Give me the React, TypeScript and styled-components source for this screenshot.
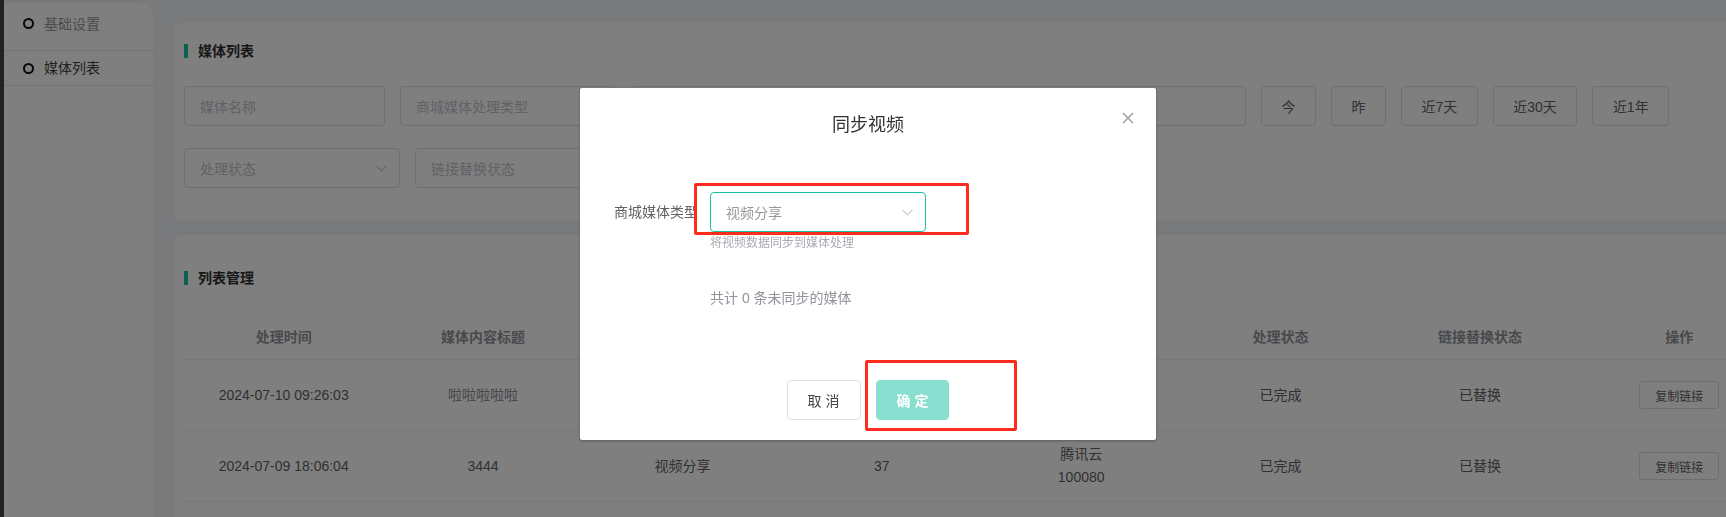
import React from "react";
import styled, { createGlobalStyle } from "styled-components";

const FONT = `"Liberation Sans", "Noto Sans CJK SC", sans-serif`;
const PRIMARY = "#13c2a2";

const GlobalStyle = createGlobalStyle`
  html, body { margin: 0; padding: 0; overflow: hidden; }
  body { font-family: ${FONT}; background: #f2f4f7; }
  * { box-sizing: border-box; }
  input { font-family: ${FONT}; }
`;

const Page = styled.div`
  display: flex;
  width: 1726px;
  height: 517px;
  overflow: hidden;
  background: #f2f4f7;
`;

const EdgeStrip = styled.div`
  flex: none;
  width: 4px;
  background: #444;
`;

const Sidebar = styled.nav`
  flex: none;
  width: 149px;
  margin-top: 3px;
  background: #fff;
  border-top-right-radius: 12px;
  display: flex;
  flex-direction: column;
`;

const NavItem = styled.div<{ $active?: boolean; $first?: boolean }>`
  display: flex;
  align-items: center;
  gap: 10px;
  padding-left: 19px;
  height: ${(p) => (p.$first ? 48 : 35)}px;
  padding-bottom: ${(p) => (p.$first ? 6 : 0)}px;
  border-bottom: 1px solid #e6e6e6;
  font-size: 14px;
  line-height: 20px;
  color: ${(p) => (p.$active ? "#444" : "#999")};
`;

const NavDot = styled.span`
  width: 11px;
  height: 11px;
  border: 2px solid #111;
  border-radius: 50%;
  flex: none;
`;

const Main = styled.main`
  flex: none;
  display: flex;
  flex-direction: column;
  gap: 15px;
  padding: 23px 0 0 21px;
`;

const Card = styled.section<{ $pt: number; $pb: number }>`
  width: 1640px;
  background: #fff;
  border-radius: 8px;
  padding: ${(p) => p.$pt}px 10px ${(p) => p.$pb}px;
`;

const SectionTitle = styled.h2`
  margin: 0;
  display: flex;
  align-items: center;
  gap: 10px;
  height: 14px;
  font-size: 14px;
  line-height: 14px;
  font-weight: bold;
  color: #303133;
  &::before {
    content: "";
    width: 4px;
    height: 14px;
    background: ${PRIMARY};
  }
`;

const FilterRow = styled.div<{ $mt: number }>`
  display: flex;
  gap: 15px;
  margin-top: ${(p) => p.$mt}px;
`;

const Field = styled.div<{ $w: number }>`
  flex: none;
  width: ${(p) => p.$w}px;
  height: 40px;
  border: 1px solid #dcdfe6;
  border-radius: 4px;
  background: #fff;
  display: flex;
  align-items: center;
  justify-content: space-between;
  padding: 0 12px 0 15px;
  font-size: 14px;
  color: #c0c4cc;
`;

const RangeSep = styled.span`
  color: #606266;
  padding: 0 8px;
`;

const RangeHalf = styled.span`
  flex: 1;
  text-align: center;
`;

const QuickBtn = styled.button`
  flex: none;
  height: 40px;
  padding: 0 19.5px;
  border: 1px solid #dcdfe6;
  border-radius: 4px;
  background: #fff;
  font-family: ${FONT};
  font-size: 14px;
  color: #606266;
`;

const Grid = styled.div`
  margin-top: 27px;
  width: 1595px;
`;

const GridRow = styled.div<{ $h: number }>`
  display: grid;
  grid-template-columns: repeat(8, 199.375px);
  height: ${(p) => p.$h}px;
  border-bottom: 1px solid #ebeef5;
`;

const HeadCell = styled.div`
  display: flex;
  align-items: center;
  justify-content: center;
  font-size: 14px;
  font-weight: bold;
  color: #909399;
`;

const Cell = styled.div<{ $muted?: boolean }>`
  display: flex;
  flex-direction: column;
  align-items: center;
  justify-content: center;
  font-size: 14px;
  line-height: 23px;
  color: ${(p) => (p.$muted ? "#8d8f94" : "#606266")};
`;

const SmallBtn = styled.button`
  height: 28px;
  width: 80px;
  padding: 0;
  border: 1px solid #dcdfe6;
  border-radius: 3px;
  background: #fff;
  font-family: ${FONT};
  font-size: 12px;
  color: #606266;
`;

const Mask = styled.div`
  position: fixed;
  inset: 0;
  background: rgba(0, 0, 0, 0.5);
`;

const DialogLayer = styled.div`
  position: fixed;
  inset: 0;
  display: flex;
  justify-content: center;
  align-items: flex-start;
  padding: 88px 0 0 10px;
`;

const Dialog = styled.div`
  position: relative;
  width: 576px;
  height: 352px;
  background: #fff;
  border-radius: 2px;
  box-shadow: 0 1px 3px rgba(0, 0, 0, 0.3);
  display: flex;
  flex-direction: column;
`;

const DialogTitle = styled.div`
  padding: 25px 20px 0;
  text-align: center;
  font-size: 18px;
  line-height: 24px;
  color: #303133;
`;

const CloseBtn = styled.button`
  position: absolute;
  left: 542px;
  top: 24px;
  width: 12px;
  height: 12px;
  padding: 0;
  border: 0;
  background: none;
  display: flex;
`;

const DialogBody = styled.div`
  padding-top: 55px;
  display: flex;
  flex-direction: column;
`;

const FormRow = styled.div`
  display: flex;
  align-items: center;
`;

const FormLabel = styled.label`
  width: 130px;
  padding-right: 12px;
  text-align: right;
  font-size: 14px;
  line-height: 40px;
  color: #606266;
`;

const SelectBox = styled.div`
  width: 216px;
  height: 40px;
  border: 1px solid ${PRIMARY};
  border-radius: 4px;
  display: flex;
  align-items: center;
  justify-content: space-between;
  padding: 0 12px 0 15px;
  font-size: 14px;
  color: #999;
`;

const Indented = styled.div<{ $mt: number; $size: number; $color: string }>`
  margin: ${(p) => p.$mt}px 0 0 130px;
  font-size: ${(p) => p.$size}px;
  line-height: 20px;
  color: ${(p) => p.$color};
`;

const DialogFooter = styled.div`
  margin-top: auto;
  padding-bottom: 20px;
  display: flex;
  justify-content: center;
  gap: 15px;
`;

const FooterBtn = styled.button<{ $primary?: boolean }>`
  height: 40px;
  padding: 0 20px;
  border-radius: 4px;
  border: 1px solid ${(p) => (p.$primary ? "#88dfcf" : "#dcdfe6")};
  background: ${(p) => (p.$primary ? "#88dfcf" : "#fff")};
  color: ${(p) => (p.$primary ? "#fff" : "#444")};
  font-weight: ${(p) => (p.$primary ? "bold" : "normal")};
  font-family: ${FONT};
  font-size: 14px;
  white-space: pre;
`;

const Annotation = styled.div<{ $l: number; $t: number; $w: number; $h: number }>`
  position: absolute;
  left: ${(p) => p.$l}px;
  top: ${(p) => p.$t}px;
  width: ${(p) => p.$w}px;
  height: ${(p) => p.$h}px;
  border: 3px solid #ff2b1c;
  border-radius: 2px;
  pointer-events: none;
`;

const Chevron = ({ color = "#c0c4cc" }: { color?: string }) => (
  <svg width="11" height="7" viewBox="0 0 11 7" fill="none">
    <polyline points="0.5,0.8 5.5,5.8 10.5,0.8" stroke={color} strokeWidth="1.1" />
  </svg>
);

const headers = ["处理时间", "媒体内容标题", "媒体类型", "媒体ID", "存储位置", "处理状态", "链接替换状态", "操作"];

const rows = [
  { time: "2024-07-10 09:26:03", title: "啦啦啦啦啦", muted: true, type: "视频分享", id: "38" },
  { time: "2024-07-09 18:06:04", title: "3444", muted: false, type: "视频分享", id: "37" },
];

export default function App() {
  return (
    <>
      <GlobalStyle />
      <Page>
        <EdgeStrip />
        <Sidebar>
          <NavItem $first>
            <NavDot />
            基础设置
          </NavItem>
          <NavItem $active>
            <NavDot />
            媒体列表
          </NavItem>
        </Sidebar>
        <Main>
          <Card $pt={21} $pb={32}>
            <SectionTitle>媒体列表</SectionTitle>
            <FilterRow $mt={28}>
              <Field $w={201}>媒体名称</Field>
              <Field $w={216}>商城媒体处理类型</Field>
              <Field $w={615}>
                <RangeHalf>开始日期</RangeHalf>
                <RangeSep>至</RangeSep>
                <RangeHalf>结束日期</RangeHalf>
              </Field>
              <QuickBtn>今</QuickBtn>
              <QuickBtn>昨</QuickBtn>
              <QuickBtn>近7天</QuickBtn>
              <QuickBtn>近30天</QuickBtn>
              <QuickBtn>近1年</QuickBtn>
            </FilterRow>
            <FilterRow $mt={22}>
              <Field $w={216}>
                处理状态
                <Chevron />
              </Field>
              <Field $w={216}>
                链接替换状态
                <Chevron />
              </Field>
            </FilterRow>
          </Card>
          <Card $pt={36} $pb={40}>
            <SectionTitle>列表管理</SectionTitle>
            <Grid>
              <GridRow $h={48}>
                {headers.map((h) => (
                  <HeadCell key={h}>{h}</HeadCell>
                ))}
              </GridRow>
              {rows.map((r) => (
                <GridRow $h={71} key={r.time}>
                  <Cell>{r.time}</Cell>
                  <Cell $muted={r.muted}>{r.title}</Cell>
                  <Cell>{r.type}</Cell>
                  <Cell>{r.id}</Cell>
                  <Cell>
                    <span>腾讯云</span>
                    <span>100080</span>
                  </Cell>
                  <Cell>已完成</Cell>
                  <Cell>已替换</Cell>
                  <Cell>
                    <SmallBtn>复制链接</SmallBtn>
                  </Cell>
                </GridRow>
              ))}
            </Grid>
          </Card>
        </Main>
      </Page>
      <Mask />
      <DialogLayer>
        <Dialog>
          <DialogTitle>同步视频</DialogTitle>
          <CloseBtn aria-label="关闭">
            <svg width="12" height="12" viewBox="0 0 12 12">
              <path d="M1 1L11 11M11 1L1 11" stroke="#909399" strokeWidth="1.2" />
            </svg>
          </CloseBtn>
          <DialogBody>
            <FormRow>
              <FormLabel>商城媒体类型</FormLabel>
              <SelectBox>
                视频分享
                <Chevron />
              </SelectBox>
            </FormRow>
            <Indented $mt={1} $size={12} $color="#a8abb2">
              将视频数据同步到媒体处理
            </Indented>
            <Indented $mt={35} $size={14} $color="#909399">
              共计 0 条未同步的媒体
            </Indented>
          </DialogBody>
          <DialogFooter>
            <FooterBtn>取 消</FooterBtn>
            <FooterBtn $primary>确 定</FooterBtn>
          </DialogFooter>
          <Annotation $l={114} $t={95} $w={275} $h={52} />
          <Annotation $l={285} $t={272} $w={152} $h={71} />
        </Dialog>
      </DialogLayer>
    </>
  );
}
